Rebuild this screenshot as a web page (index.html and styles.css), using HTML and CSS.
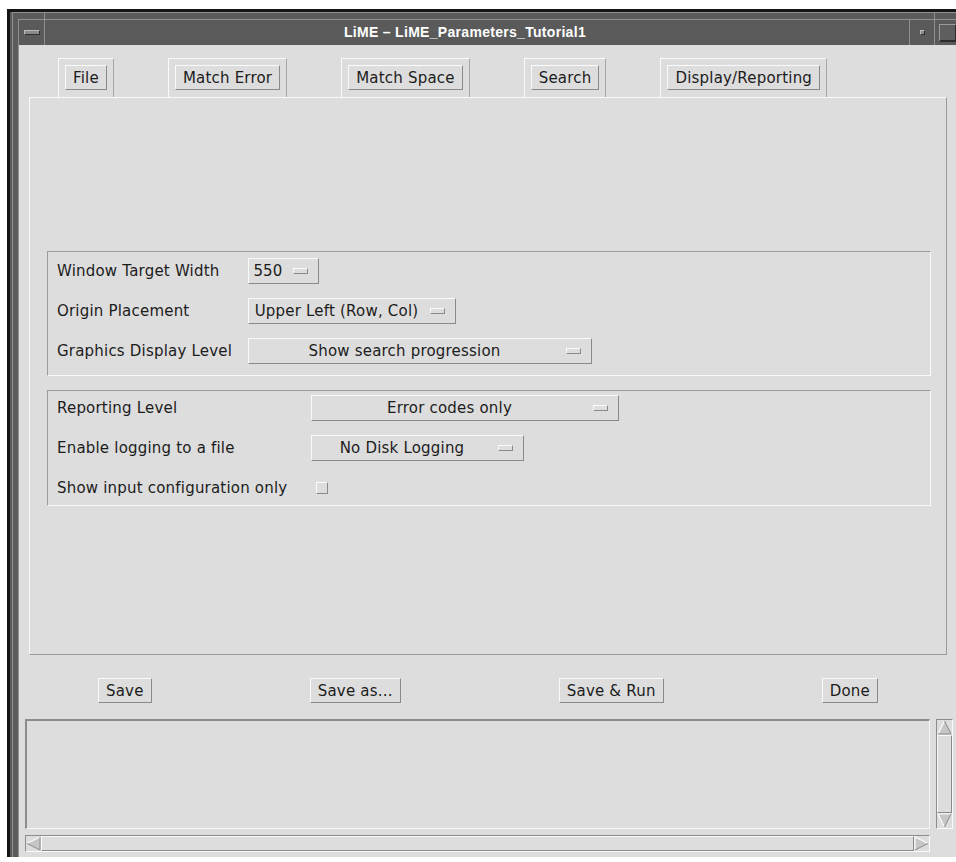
FILE: index.html
```html
<!DOCTYPE html>
<html>
<head>
<meta charset="utf-8">
<title>LiME – LiME_Parameters_Tutorial1</title>
<link rel="stylesheet" href="styles.css">
</head>
<body>
<div class="frame">
  <div class="frame-bevel">
    <div class="frame-inner">
      <div class="titlebar">
        <div class="tb-btn tb-menu"><span class="menu-bar"></span></div>
        <div class="tb-title">LiME – LiME_Parameters_Tutorial1</div>
        <div class="tb-btn tb-min"><span class="min-dot"></span></div>
        <div class="tb-btn tb-max"><span class="max-box"></span></div>
      </div>

      <div class="client">
        <div class="tabs">
          <div class="tab"><button class="btn">File</button></div>
          <div class="tab"><button class="btn">Match Error</button></div>
          <div class="tab"><button class="btn">Match Space</button></div>
          <div class="tab"><button class="btn">Search</button></div>
          <div class="tab"><button class="btn">Display/Reporting</button></div>
        </div>

        <div class="panel">
          <div class="group group-display">
            <span class="label">Window Target Width</span>
            <div class="optmenu om-550"><span class="om-text">550</span><span class="om-ind"></span></div>

            <span class="label">Origin Placement</span>
            <div class="optmenu om-origin"><span class="om-text">Upper Left (Row, Col)</span><span class="om-ind"></span></div>

            <span class="label">Graphics Display Level</span>
            <div class="optmenu om-graphics"><span class="om-text">Show search progression</span><span class="om-ind"></span></div>
          </div>

          <div class="group group-report">
            <span class="label">Reporting Level</span>
            <div class="optmenu om-report"><span class="om-text">Error codes only</span><span class="om-ind"></span></div>

            <span class="label">Enable logging to a file</span>
            <div class="optmenu om-log"><span class="om-text">No Disk Logging</span><span class="om-ind"></span></div>

            <span class="label">Show input configuration only</span>
            <div class="check-cell"><span class="check"></span></div>
          </div>
        </div>

        <div class="actions">
          <button class="btn">Save</button>
          <button class="btn">Save as...</button>
          <button class="btn">Save &amp; Run</button>
          <button class="btn">Done</button>
        </div>

        <div class="scrolled">
          <div class="textarea"></div>
          <div class="vscroll">
            <span class="arrow">
              <svg width="15" height="15" viewBox="0 0 15 15">
                <polygon points="7.5,1 14,14 1,14" fill="#c6c6c6"/>
                <polyline points="1,14 7.5,1" fill="none" stroke="#fafafa" stroke-width="1.2"/>
                <polyline points="7.5,1 14,14 1,14" fill="none" stroke="#8c8c8c" stroke-width="1"/>
              </svg>
            </span>
            <span class="slider"></span>
            <span class="arrow">
              <svg width="15" height="15" viewBox="0 0 15 15">
                <polygon points="1,1 14,1 7.5,14" fill="#c6c6c6"/>
                <polyline points="7.5,14 1,1 14,1" fill="none" stroke="#fafafa" stroke-width="1.2"/>
                <polyline points="14,1 7.5,14" fill="none" stroke="#8c8c8c" stroke-width="1"/>
              </svg>
            </span>
          </div>
          <div class="hscroll">
            <span class="arrow">
              <svg width="15" height="15" viewBox="0 0 15 15">
                <polygon points="1,7.5 14,1 14,14" fill="#c6c6c6"/>
                <polyline points="14,1 1,7.5" fill="none" stroke="#fafafa" stroke-width="1.2"/>
                <polyline points="1,7.5 14,14 14,1" fill="none" stroke="#8c8c8c" stroke-width="1"/>
              </svg>
            </span>
            <span class="slider"></span>
            <span class="arrow">
              <svg width="15" height="15" viewBox="0 0 15 15">
                <polygon points="1,1 14,7.5 1,14" fill="#c6c6c6"/>
                <polyline points="1,14 1,1 14,7.5" fill="none" stroke="#fafafa" stroke-width="1.2"/>
                <polyline points="14,7.5 1,14" fill="none" stroke="#8c8c8c" stroke-width="1"/>
              </svg>
            </span>
          </div>
        </div>
      </div>
    </div>
  </div>
</div>
</body>
</html>
```

FILE: styles.css
```css
/* Motif-style dialog window with mwm decorations */
html, body {
  margin: 0;
  padding: 0;
}

body {
  width: 956px;
  height: 862px;
  overflow: hidden;
  background: #ffffff;
  font-family: "DejaVu Sans", sans-serif;
  font-size: 15px;
  letter-spacing: 0.2px;
  color: #1c1c1c;
}

/* window manager frame */
.frame {
  margin: 9px 0 0 7px;
  width: 990px;
  background: #5b5b5b;
  border-top: 3px solid #151515;
  border-left: 3px solid #151515;
  padding-left: 2px;
}

.frame-bevel {
  border-top: 1px solid #8f8f8f;
  border-left: 1px solid #8f8f8f;
  padding: 6px 0 0 5px;
}

.frame-inner {
  width: 938px;
  border-top: 1px solid #8f8f8f;
  border-left: 1px solid #8f8f8f;
}

.titlebar {
  display: flex;
  height: 25px;
  background: #5a5a5a;
}

.tb-btn {
  position: relative;
  display: flex;
  align-items: center;
  justify-content: center;
  flex: none;
}

.tb-menu {
  width: 25px;
  border-right: 1px solid #8f8f8f;
}

/* corner segment marks running through the frame edge */
.tb-menu::before {
  content: "";
  position: absolute;
  right: -1px;
  top: -8px;
  width: 1px;
  height: 8px;
  background: #8f8f8f;
}

.tb-max::before {
  content: "";
  position: absolute;
  left: -1px;
  top: -8px;
  width: 1px;
  height: 8px;
  background: #8f8f8f;
}

.menu-bar {
  width: 14px;
  height: 3px;
  background: #8a8a8a;
  border-top: 1px solid #bcbcbc;
  border-left: 1px solid #bcbcbc;
  border-bottom: 1px solid #303030;
  border-right: 1px solid #303030;
}

.tb-title {
  flex: 1;
  padding-right: 24px;
  text-align: center;
  line-height: 25px;
  color: #ffffff;
  font-family: "Liberation Sans", sans-serif;
  font-weight: bold;
  font-size: 14px;
  letter-spacing: 0.3px;
  white-space: nowrap;
}

.tb-min {
  width: 24px;
  border-left: 1px solid #8f8f8f;
}

.min-dot {
  width: 3px;
  height: 3px;
  background: #8a8a8a;
  border-top: 1px solid #bcbcbc;
  border-left: 1px solid #bcbcbc;
  border-bottom: 1px solid #303030;
  border-right: 1px solid #303030;
}

.tb-max {
  width: 23px;
  border-left: 1px solid #8f8f8f;
  justify-content: flex-start;
  padding-left: 4px;
  box-sizing: border-box;
}

.max-box {
  width: 15px;
  height: 15px;
  background: #5e5e5e;
  border-top: 1px solid #9a9a9a;
  border-left: 1px solid #9a9a9a;
  border-bottom: 2px solid #2c2c2c;
  border-right: 2px solid #2c2c2c;
}

/* client area */
.client {
  height: 812px;
  overflow: hidden;
  background: #dddddd;
  padding-top: 13px;
  box-sizing: border-box;
}

.btn {
  height: 25px;
  box-sizing: border-box;
  padding: 0 7px;
  margin: 0;
  background: #dddddd;
  border-top: 1px solid #fafafa;
  border-left: 1px solid #fafafa;
  border-right: 1px solid #8a8a8a;
  border-bottom: 1px solid #8a8a8a;
  border-radius: 0;
  font: inherit;
  letter-spacing: inherit;
  color: inherit;
}

.tabs {
  display: flex;
  gap: 54px;
  padding-left: 39px;
}

.tab {
  padding: 6px 6px 7px 6px;
  border-top: 1px solid #fafafa;
  border-left: 1px solid #fafafa;
  border-right: 1px solid #a6a6a6;
}

.panel {
  margin: 0 10px;
  height: 558px;
  box-sizing: border-box;
  border-top: 1px solid #fafafa;
  border-left: 1px solid #fafafa;
  border-right: 1px solid #9a9a9a;
  border-bottom: 1px solid #9a9a9a;
  padding: 4px 15px 0 17px;
  display: flex;
  flex-direction: column;
  justify-content: center;
  gap: 14px;
}

.group {
  display: grid;
  grid-auto-rows: 26px;
  row-gap: 14px;
  align-items: center;
  padding-left: 9px;
  border-top: 1px solid #9c9c9c;
  border-left: 1px solid #9c9c9c;
  border-right: 1px solid #fafafa;
  border-bottom: 1px solid #fafafa;
}

.group-display {
  grid-template-columns: 191px 1fr;
  padding-top: 6px;
  padding-bottom: 11px;
}

.group-report {
  grid-template-columns: 254px 1fr;
  padding-top: 4px;
  padding-bottom: 4px;
}

.label {
  white-space: nowrap;
}

.optmenu {
  justify-self: start;
  display: flex;
  align-items: center;
  height: 26px;
  box-sizing: border-box;
  border-top: 1px solid #fafafa;
  border-left: 1px solid #fafafa;
  border-right: 1px solid #8a8a8a;
  border-bottom: 1px solid #8a8a8a;
}

.om-text {
  flex: 1;
  text-align: center;
  white-space: nowrap;
}

.om-ind {
  flex: none;
  width: 13px;
  height: 4px;
  margin: 0 10px 0 6px;
  border-top: 1px solid #fafafa;
  border-left: 1px solid #fafafa;
  border-right: 1px solid #8a8a8a;
  border-bottom: 1px solid #8a8a8a;
}

.om-550 { width: 71px; }
.om-origin { width: 208px; }
.om-graphics { width: 344px; }
.om-report { width: 308px; }
.om-log { width: 213px; }

.check-cell {
  display: flex;
  align-items: center;
  padding-left: 5px;
}

.check {
  width: 10px;
  height: 10px;
  border-top: 1px solid #fafafa;
  border-left: 1px solid #fafafa;
  border-right: 1px solid #8a8a8a;
  border-bottom: 1px solid #8a8a8a;
}

/* bottom command row */
.actions {
  display: flex;
  justify-content: space-between;
  padding: 0 79px;
  margin-top: 23px;
}

/* scrolled message window */
.scrolled {
  display: grid;
  grid-template-columns: 905px 17px;
  grid-template-rows: 110px 17px;
  column-gap: 6px;
  row-gap: 6px;
  margin: 16px 0 0 6px;
}

.textarea {
  box-sizing: border-box;
  border-top: 2px solid #8c8c8c;
  border-left: 2px solid #8c8c8c;
  border-right: 1px solid #f6f6f6;
  border-bottom: 1px solid #f6f6f6;
}

.vscroll,
.hscroll {
  display: flex;
  box-sizing: border-box;
  border-top: 1px solid #8c8c8c;
  border-left: 1px solid #8c8c8c;
  border-right: 1px solid #fafafa;
  border-bottom: 1px solid #fafafa;
}

.vscroll {
  flex-direction: column;
}

.hscroll {
  grid-column: 1;
}

.arrow {
  flex: none;
  width: 15px;
  height: 15px;
  display: block;
}

.arrow svg {
  display: block;
}

.slider {
  flex: 1;
  box-sizing: border-box;
  border-top: 1px solid #fafafa;
  border-left: 1px solid #fafafa;
  border-right: 1px solid #8a8a8a;
  border-bottom: 1px solid #8a8a8a;
}
```
